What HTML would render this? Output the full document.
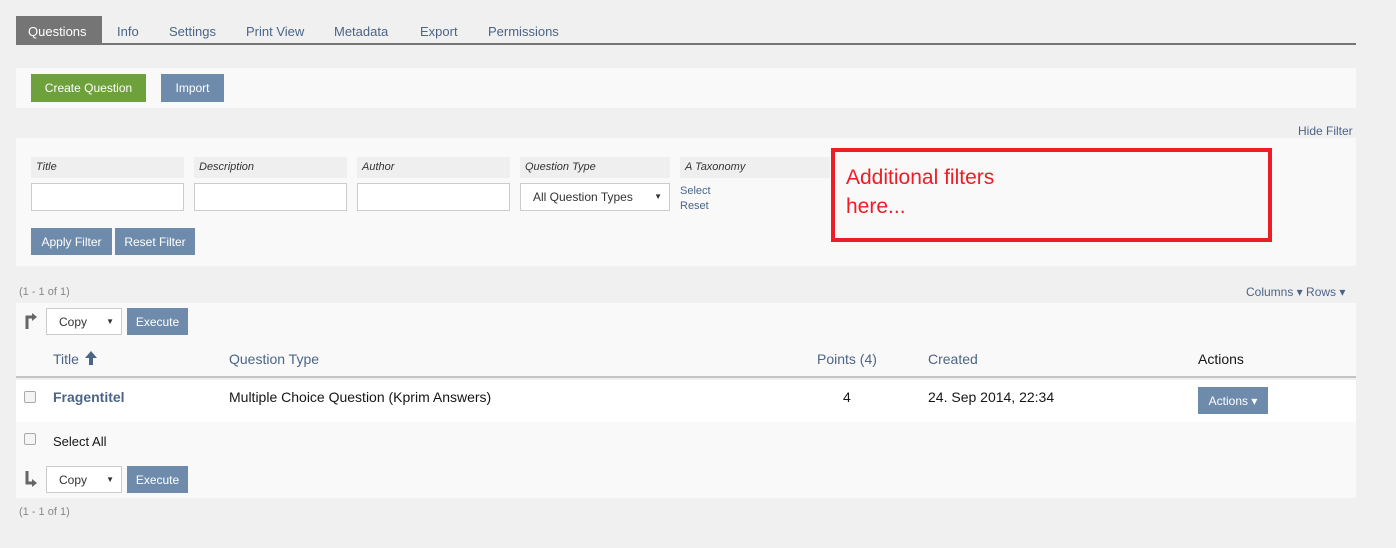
<!DOCTYPE html>
<html><head><meta charset="utf-8"><style>
*{box-sizing:border-box;margin:0;padding:0}
body{width:1396px;height:548px;background:#f0f0f0;font-family:"Liberation Sans",sans-serif;font-size:13px;color:#161616;position:relative;overflow:hidden}
.a{position:absolute;white-space:nowrap}
.btn{position:absolute;color:#fff;background:#6f8bac;font-size:12px;display:flex;align-items:center;justify-content:center}
.lbl{position:absolute;background:#efefef;font-style:italic;font-size:11px;padding:4px 5px;height:21px;top:157px;color:#333;font-weight:normal}
.inp{position:absolute;background:#fff;border:1px solid #ccc;top:183px;height:28px}
.sel{position:absolute;background:#fff;border:1px solid #ccc;font-size:12px;color:#333;padding:6px 12px}
.sel:after{content:"▼";position:absolute;right:7px;top:8px;font-size:8px}
.cb{position:absolute;width:12px;height:12px;border:1px solid #aaa;border-radius:2px;background:#f4f4f4}
</style></head><body>
<div class="a" style="left:16px;top:16px;width:86px;height:28px;background:#757575"></div>
<div class="a" style="left:16px;top:43px;width:1340px;height:2px;background:#757575"></div>
<div class="a" style="left:28px;top:24px;color:#fff">Questions</div>
<div class="a" style="left:117px;top:24px;color:#4c6586">Info</div>
<div class="a" style="left:169px;top:24px;color:#4c6586">Settings</div>
<div class="a" style="left:246px;top:24px;color:#4c6586">Print View</div>
<div class="a" style="left:334px;top:24px;color:#4c6586">Metadata</div>
<div class="a" style="left:420px;top:24px;color:#4c6586">Export</div>
<div class="a" style="left:488px;top:24px;color:#4c6586">Permissions</div>

<div class="a" style="left:16px;top:68px;width:1340px;height:40px;background:#f9f9f9"></div>
<div class="btn" style="left:31px;top:74px;width:115px;height:28px;background:#6ea03c">Create Question</div>
<div class="btn" style="left:161px;top:74px;width:63px;height:28px">Import</div>

<div class="a" style="left:1298px;top:124px;font-size:12px;color:#4c6586">Hide Filter</div>
<div class="a" style="left:16px;top:138px;width:1340px;height:128px;background:#f9f9f9"></div>
<div class="lbl" style="left:31px;width:153px">Title</div>
<div class="lbl" style="left:194px;width:153px">Description</div>
<div class="lbl" style="left:357px;width:153px">Author</div>
<div class="lbl" style="left:520px;width:150px">Question Type</div>
<div class="lbl" style="left:680px;width:150px">A Taxonomy</div>
<div class="inp" style="left:31px;width:153px"></div>
<div class="inp" style="left:194px;width:153px"></div>
<div class="inp" style="left:357px;width:153px"></div>
<div class="sel" style="left:520px;top:183px;width:150px;height:28px">All Question Types</div>
<div class="a" style="left:680px;top:184px;font-size:11px;color:#4c6586;line-height:15px">Select<br>Reset</div>
<div class="btn" style="left:31px;top:228px;width:81px;height:27px">Apply Filter</div>
<div class="btn" style="left:115px;top:228px;width:80px;height:27px">Reset Filter</div>
<div class="a" style="left:831px;top:148px;width:441px;height:94px;border:4px solid #ee1c25"></div>
<div class="a" style="left:846px;top:163px;font-size:21px;color:#ee1c25;line-height:29px">Additional filters<br>here...</div>

<div class="a" style="left:19px;top:286px;font-size:11px;color:#888">(1 - 1 of 1)</div>
<div class="a" style="left:1246px;top:285px;font-size:12px;color:#4c6586">Columns ▾ Rows ▾</div>
<div class="a" style="left:16px;top:303px;width:1340px;height:38px;background:#f9f9f9"></div>
<svg class="a" style="left:25px;top:313px" width="12" height="16" viewBox="0 0 12 16"><path d="M2 16V4h6" fill="none" stroke="#666" stroke-width="3"/><path d="M7 0l5 4-5 4z" fill="#666"/></svg>
<div class="sel" style="left:46px;top:308px;width:76px;height:27px">Copy</div>
<div class="btn" style="left:127px;top:308px;width:61px;height:27px">Execute</div>
<div class="a" style="left:16px;top:341px;width:1340px;height:37px;background:#f9f9f9;border-bottom:2px solid #c4c4c4"></div>
<div class="a" style="left:53px;top:351px;font-size:14px;color:#4c6586">Title</div>
<svg class="a" style="left:85px;top:351px" width="12" height="14" viewBox="0 0 12 14"><path d="M6 0l6 7H8v7H4V7H0z" fill="#4c6586"/></svg>
<div class="a" style="left:229px;top:351px;font-size:14px;color:#4c6586">Question Type</div>
<div class="a" style="left:817px;top:351px;font-size:14px;color:#4c6586">Points (4)</div>
<div class="a" style="left:928px;top:351px;font-size:14px;color:#4c6586">Created</div>
<div class="a" style="left:1198px;top:351px;font-size:14px">Actions</div>
<div class="a" style="left:16px;top:380px;width:1340px;height:42px;background:#fff"></div>
<div class="cb" style="left:24px;top:391px"></div>
<div class="a" style="left:53px;top:389px;font-size:14px;font-weight:bold;color:#4c6586">Fragentitel</div>
<div class="a" style="left:229px;top:389px;font-size:14px">Multiple Choice Question (Kprim Answers)</div>
<div class="a" style="left:843px;top:389px;font-size:14px">4</div>
<div class="a" style="left:928px;top:389px;font-size:14px">24. Sep 2014, 22:34</div>
<div class="btn" style="left:1198px;top:387px;width:70px;height:27px">Actions ▾</div>
<div class="a" style="left:16px;top:422px;width:1340px;height:76px;background:#f9f9f9"></div>
<div class="cb" style="left:24px;top:433px"></div>
<div class="a" style="left:53px;top:434px">Select All</div>
<svg class="a" style="left:25px;top:471px" width="12" height="16" viewBox="0 0 12 16"><path d="M2 0v12h6" fill="none" stroke="#666" stroke-width="3"/><path d="M7 8l5 4-5 4z" fill="#666"/></svg>
<div class="sel" style="left:46px;top:466px;width:76px;height:27px">Copy</div>
<div class="btn" style="left:127px;top:466px;width:61px;height:27px">Execute</div>
<div class="a" style="left:19px;top:506px;font-size:11px;color:#888">(1 - 1 of 1)</div>
</body></html>
